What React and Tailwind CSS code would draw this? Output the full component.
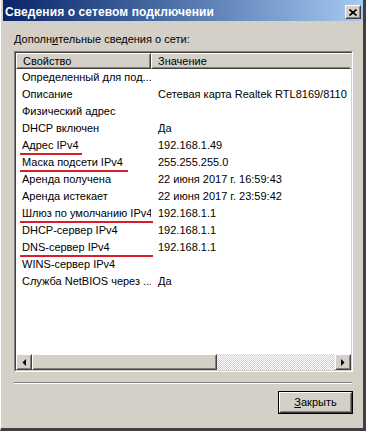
import React from "react";

const rows = [
  { name: "Определенный для под...", value: "" },
  { name: "Описание", value: "Сетевая карта Realtek RTL8169/8110" },
  { name: "Физический адрес", value: "" },
  { name: "DHCP включен", value: "Да" },
  { name: "Адрес IPv4", value: "192.168.1.49", mark: "w-[62px]" },
  { name: "Маска подсети IPv4", value: "255.255.255.0", mark: "w-[108px]" },
  { name: "Аренда получена", value: "22 июня 2017 г. 16:59:43" },
  { name: "Аренда истекает", value: "22 июня 2017 г. 23:59:42" },
  { name: "Шлюз по умолчанию IPv4", value: "192.168.1.1", mark: "w-[133px]" },
  { name: "DHCP-сервер IPv4", value: "192.168.1.1" },
  { name: "DNS-сервер IPv4", value: "192.168.1.1", mark: "w-[133px]" },
  { name: "WINS-сервер IPv4", value: "" },
  { name: "Служба NetBIOS через ...", value: "Да" },
];

/* raised 3d box, classic windows style */
const raised =
  "border border-t-white border-l-white border-r-[#404040] border-b-[#404040]";
const raisedInner =
  "border border-t-[#d4d0c8] border-l-[#d4d0c8] border-r-[#808080] border-b-[#808080]";

function ArrowBtn({ dir }) {
  return (
    <div className={`w-[16px] h-[16px] bg-[#d4d0c8] ${raised}`}>
      <div className={`w-full h-full flex items-center justify-center ${raisedInner}`}>
        <svg width="4" height="7" viewBox="0 0 4 7">
          {dir === "left" ? (
            <polygon points="4,0 4,7 0.5,3.5" fill="#000" />
          ) : (
            <polygon points="0,0 0,7 3.5,3.5" fill="#000" />
          )}
        </svg>
      </div>
    </div>
  );
}

export default function App() {
  return (
    <div
      className="w-[366px] h-[431px] bg-[#d4d0c8] flex flex-col text-[11px] text-black border-l border-l-white border-r-[3px] border-r-[#404040] border-b-[3px] border-b-[#404040] pl-[2px] pr-0"
      style={{ fontFamily: '"Liberation Sans", Arial, sans-serif' }}
    >
      {/* TITLE BAR */}
      <div className="h-[21px] flex items-center pt-[3px] bg-gradient-to-r from-[#0a246a] to-[#a6caf0] pr-[2px]">
        <div className="flex-1 pl-[2px] text-white font-bold text-[12px] leading-none tracking-[0.1px]">
          Сведения о сетевом подключении
        </div>
        <div className={`w-[16px] h-[14px] bg-[#d4d0c8] ${raised}`}>
          <div className={`w-full h-full flex items-center justify-center ${raisedInner}`}>
            <svg width="8" height="7" viewBox="0 0 8 7">
              <path d="M0.5 0.5 L7.5 6.5 M7.5 0.5 L0.5 6.5" stroke="#000" strokeWidth="1.6" />
            </svg>
          </div>
        </div>
      </div>

      {/* BODY */}
      <div className="flex-1 flex flex-col pl-[11px] pr-[8px]">
        <div className="mt-[12px] h-[13px] leading-[13px]">
          Дополн<span className="underline underline-offset-1">и</span>тельные сведения о сети:
        </div>

        {/* LIST */}
        <div className="mt-[5px] w-[339px] border border-t-[#808080] border-l-[#808080] border-r-white border-b-white">
          <div className="h-[319px] flex flex-col bg-white border border-t-[#404040] border-l-[#404040] border-r-[#d4d0c8] border-b-[#d4d0c8] overflow-hidden">
            {/* header */}
            <div className="flex h-[16px] shrink-0">
              <div className={`w-[135px] bg-[#d4d0c8] ${raised}`}>
                <div className={`h-full pl-[5px] leading-[13px] ${raisedInner}`}>Свойство</div>
              </div>
              <div className={`flex-1 bg-[#d4d0c8] ${raised} border-r-[#d4d0c8]`}>
                <div className={`h-full pl-[5px] leading-[13px] ${raisedInner} border-r-[#d4d0c8]`}>Значение</div>
              </div>
            </div>

            {/* rows */}
            <div className="flex-1">
              {rows.map((r) => (
                <div key={r.name} className="relative flex h-[17px] leading-[17px] whitespace-nowrap">
                  <div className="w-[135px] pl-[6px] overflow-hidden">{r.name}</div>
                  <div className="flex-1 pl-[7px] overflow-hidden">{r.value}</div>
                  {r.mark && (
                    <div className={`absolute left-[4px] bottom-[-1px] h-[2px] bg-[#d81e2c] ${r.mark}`} />
                  )}
                </div>
              ))}
            </div>

            {/* horizontal scrollbar */}
            <div className="flex h-[16px] shrink-0">
              <ArrowBtn dir="left" />
              <div className={`w-[185px] bg-[#d4d0c8] ${raised}`}>
                <div className={`w-full h-full ${raisedInner}`} />
              </div>
              <div className="flex-1 bg-[repeating-conic-gradient(#ffffff_0_25%,#d4d0c8_0_50%)] bg-[length:2px_2px]" />
              <ArrowBtn dir="right" />
            </div>
          </div>
        </div>

        {/* separator */}
        <div className="mt-[10px] w-[338px] border-t border-t-[#808080] border-b border-b-white" />

        {/* button */}
        <div className="mt-[7px] w-[339px] flex justify-end">
          <button className="w-[75px] h-[23px] border border-black bg-[#d4d0c8] p-0">
            <div className={`w-full h-full ${raised}`}>
              <div className={`w-full h-full flex items-center justify-center ${raisedInner}`}>
                <span>
                  <span className="underline underline-offset-1">З</span>акрыть
                </span>
              </div>
            </div>
          </button>
        </div>
      </div>
    </div>
  );
}
